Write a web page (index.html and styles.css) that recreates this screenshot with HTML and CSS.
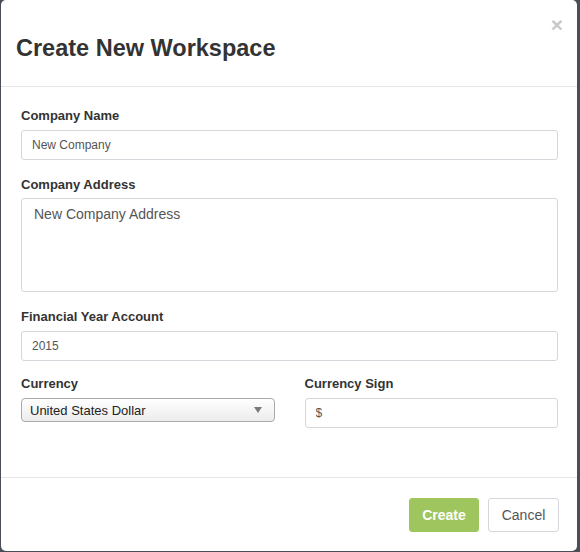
FILE: index.html
```html
<!DOCTYPE html>
<html>
<head>
<meta charset="utf-8">
<link rel="stylesheet" href="styles.css">
</head>
<body>
<div class="modal">
  <div class="modal-header">
    <h1 class="title">Create New Workspace</h1>
    <span class="close">&times;</span>
  </div>
  <div class="modal-body">
    <div class="field">
      <label class="label">Company Name</label>
      <input class="input small" type="text" value="New Company">
    </div>
    <div class="field">
      <label class="label">Company Address</label>
      <textarea class="textarea">New Company Address</textarea>
    </div>
    <div class="field">
      <label class="label">Financial Year Account</label>
      <input class="input small" type="text" value="2015">
    </div>
    <div class="row">
      <div class="field">
        <label class="label">Currency</label>
        <div class="select">
          <span>United States Dollar</span>
          <svg class="arrow" width="8" height="6" viewBox="0 0 8 6"><path d="M0 0h8L4 6z" fill="#7a7a7a"/></svg>
        </div>
      </div>
      <div class="field">
        <label class="label">Currency Sign</label>
        <input class="input small" type="text" value="$">
      </div>
    </div>
  </div>
  <div class="modal-footer">
    <button class="btn btn-primary">Create</button>
    <button class="btn btn-default">Cancel</button>
  </div>
</div>
</body>
</html>
```

FILE: styles.css
```css
html, body {
  margin: 0;
  padding: 0;
}
body {
  background: #4a4e56;
  width: 580px;
  height: 552px;
  overflow: hidden;
  font-family: "Liberation Sans", Arial, sans-serif;
  color: #333;
}
.modal {
  margin-left: 1px;
  width: 576px;
  height: 551px;
  background: #fff;
  border-radius: 5px;
  display: flex;
  flex-direction: column;
  box-sizing: border-box;
}
.modal-header {
  position: relative;
  height: 87px;
  box-sizing: border-box;
  padding: 34px 20px 0 15px;
  border-bottom: 1px solid #e5e5e5;
}
.title {
  margin: 0;
  font-size: 23.5px;
  line-height: 28px;
  font-weight: bold;
  color: #333;
}
.close {
  position: absolute;
  right: 14px;
  top: 11px;
  font-size: 21px;
  font-weight: bold;
  line-height: 28px;
  color: #c8c8c8;
}
.modal-body {
  flex: 1;
  padding: 19px 19px 0 20px;
  box-sizing: border-box;
  display: flex;
  flex-direction: column;
  gap: 15px;
}
.field {
  display: flex;
  flex-direction: column;
}
.label {
  font-size: 13px;
  font-weight: bold;
  line-height: 20px;
  color: #333;
  margin-bottom: 4px;
}
.input {
  height: 30px;
  box-sizing: border-box;
  border: 1px solid #d6d6dc;
  border-radius: 3px;
  padding: 0 10px;
  font-family: "Liberation Sans", Arial, sans-serif;
  color: #555;
  outline: none;
  width: 100%;
}
.small {
  font-size: 12px;
}
.textarea {
  height: 94px;
  margin-top: -1px;
  box-sizing: border-box;
  border: 1px solid #d6d6dc;
  border-radius: 3px;
  padding: 6px 12px;
  font-family: "Liberation Sans", Arial, sans-serif;
  font-size: 14px;
  line-height: 18px;
  color: #555;
  resize: none;
  outline: none;
  width: 100%;
}
.row {
  display: grid;
  grid-template-columns: 1fr 1fr;
  column-gap: 30px;
  margin-top: -2px;
}
.select {
  height: 24px;
  box-sizing: border-box;
  border: 1px solid #a9a9a9;
  border-radius: 4px;
  background: linear-gradient(#ffffff, #ececec);
  display: flex;
  align-items: center;
  justify-content: space-between;
  padding: 0 12px 0 8px;
  font-size: 13px;
  color: #222;
}
.arrow {
  display: block;
}
.modal-footer {
  height: 74px;
  box-sizing: border-box;
  border-top: 1px solid #e5e5e5;
  padding: 20px 18px 0 20px;
  display: flex;
  justify-content: flex-end;
  align-items: flex-start;
  gap: 9px;
}
.btn {
  height: 34px;
  box-sizing: border-box;
  border-radius: 3px;
  font-family: "Liberation Sans", Arial, sans-serif;
  font-size: 14px;
  padding: 0 12px;
}
.btn-primary {
  width: 70px;
  background: #9fc65e;
  border: 1px solid #9fc65e;
  color: #fff;
  font-weight: bold;
}
.btn-default {
  width: 71px;
  background: #fff;
  border: 1px solid #d6d6dc;
  color: #555;
}
```
